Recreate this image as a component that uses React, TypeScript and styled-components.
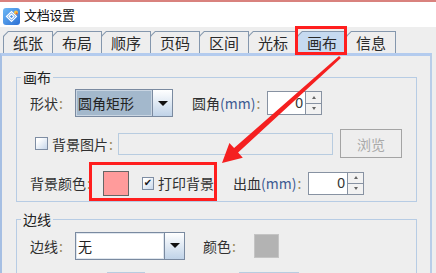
import React from "react";
import styled, { createGlobalStyle } from "styled-components";

const GlobalStyle = createGlobalStyle`
  html, body {
    margin: 0;
    padding: 0;
    background: #eeeeee;
  }
  body {
    font-family: "Noto Sans CJK SC", "Noto Sans", sans-serif;
    overflow: hidden;
  }
`;

const tabs = ["纸张", "布局", "顺序", "页码", "区间", "光标", "画布", "信息"];

const Colon: React.FC = () => <Dot>:</Dot>;

const App: React.FC = () => {
	return (
		<Window>
			<GlobalStyle />
			<TopStrip />
			<TitleBar>
				<AppIcon />
				<TitleText>文档设置</TitleText>
			</TitleBar>
			<TabStrip>
				{tabs.map((t) => (
					<TabSlot key={t} $active={t === "画布"}>
						<TabOuter>
							<TabInner $active={t === "画布"}>{t}</TabInner>
						</TabOuter>
					</TabSlot>
				))}
			</TabStrip>
			<Panel>
				<Group>
					<Legend>画布</Legend>
					<GroupBody>
						<Row $h={28}>
							<Label $w={45}>
								形状<Colon />
							</Label>
							<Combo $w={98} $selected>
								<ComboField $selected>圆角矩形</ComboField>
								<ArrowButton>
									<Triangle />
								</ArrowButton>
							</Combo>
							<Label $w={75} $ml={19}>
								圆角<Unit>(mm)</Unit>
								<Colon />
							</Label>
							<Spinner $w={55} $h={24} />
						</Row>
						<Row $h={29}>
							<CheckBox $ml={5} />
							<Label $w={66} $ml={4}>
								背景图片<Colon />
							</Label>
							<TextField />
							<Button disabled>浏览</Button>
						</Row>
						<Row $h={26}>
							<Label $w={73}>
								背景颜色<Colon />
							</Label>
							<Highlight>
								<Swatch $w={26} $h={25} $color="#ff9b9b" $border="#666666" />
								<CheckBox $ml={13} $checked>
									✔
								</CheckBox>
								<Label $w={56} $ml={4}>
									打印背景
								</Label>
							</Highlight>
							<Label $w={75} $ml={19}>
								出血<Unit>(mm)</Unit>
								<Colon />
							</Label>
							<Spinner $w={56} $h={23} />
						</Row>
					</GroupBody>
				</Group>
				<Group $mt={9}>
					<Legend>边线</Legend>
					<GroupBody $pt={5} $gap={13}>
						<Row $h={27}>
							<Label $w={45}>
								边线<Colon />
							</Label>
							<Combo $w={110}>
								<ComboField>无</ComboField>
								<ArrowButton>
									<Triangle />
								</ArrowButton>
							</Combo>
							<Label $w={51} $ml={18}>
								颜色<Colon />
							</Label>
							<Swatch $w={25} $h={24} $color="#b3b3b3" $border="#c4c4c4" />
						</Row>
						<Row $h={24}>
							<StubBox $w={38} $ml={77} />
							<StubBox $w={60} $ml={94} />
						</Row>
					</GroupBody>
				</Group>
			</Panel>
			<ArrowOverlay width="436" height="273" viewBox="0 0 436 273">
				<polygon
					points="340.9,58 238.1,152.5 242.8,157.7 222,163 229.4,142.9 234.1,148.1 339.1,56"
					fill="#f52020"
				/>
			</ArrowOverlay>
		</Window>
	);
};

const Spinner: React.FC<{ $w: number; $h: number }> = ({ $w, $h }) => (
	<SpinBox $w={$w} $h={$h}>
		<SpinField>0</SpinField>
		<SpinButtons>
			<SpinHalf>
				<SmallArrow $up />
			</SpinHalf>
			<SpinHalf>
				<SmallArrow />
			</SpinHalf>
		</SpinButtons>
	</SpinBox>
);

const AppIcon: React.FC = () => (
	<IconSvg width="17" height="17" viewBox="0 0 17 17">
		<defs>
			<linearGradient id="ig" x1="0" y1="0" x2="1" y2="1">
				<stop offset="0" stopColor="#6cb9f6" />
				<stop offset="1" stopColor="#2c6fd4" />
			</linearGradient>
		</defs>
		<rect x="0" y="0" width="17" height="17" rx="3" fill="url(#ig)" />
		<g fill="none" stroke="#ffffff" strokeWidth="1.2">
			<path d="M3.5 8.5 L8.5 3.5 L13.5 8.5 L8.5 13.5 Z" />
			<path d="M6 8.5 L8.5 6 L11 8.5 L8.5 11 Z" />
		</g>
		<circle cx="13" cy="4.5" r="2" fill="#f6c343" />
		<circle cx="13.6" cy="5.4" r="0.9" fill="#e8553a" />
	</IconSvg>
);

const Window = styled.div`
  position: relative;
  width: 436px;
  height: 273px;
  overflow: hidden;
  display: flex;
  flex-direction: column;
  background: #eeeeee;
`;

const TopStrip = styled.div`
  height: 2px;
  background: #d9827e;
  flex-shrink: 0;
`;

const TitleBar = styled.div`
  height: 25px;
  flex-shrink: 0;
  background: #ffffff;
  display: flex;
  align-items: center;
  padding-left: 3px;
  gap: 4px;
`;

const IconSvg = styled.svg`
  margin-top: 3px;
  flex-shrink: 0;
`;

const TitleText = styled.span`
  font-size: 13px;
  color: #111111;
  letter-spacing: -0.3px;
`;

const TabStrip = styled.div`
  height: 26px;
  flex-shrink: 0;
  display: flex;
  align-items: flex-end;
  padding-left: 3px;
`;

const TabSlot = styled.div<{ $active?: boolean }>`
  position: relative;
  width: 50px;
  height: 22px;
  margin-right: -1px;
  ${({ $active }) =>
		$active &&
		`
    &::after {
      content: "";
      position: absolute;
      left: -2px;
      top: -5px;
      right: 0;
      bottom: -2px;
      border: 3px solid #ff1e1e;
      z-index: 3;
      pointer-events: none;
    }
  `}
`;

const TabOuter = styled.div`
  height: 100%;
  box-sizing: border-box;
  padding: 1px 1px 0 1px;
  background: #8497ad;
  clip-path: polygon(5px 0, 100% 0, 100% 100%, 0 100%, 0 5px);
`;

const TabInner = styled.div<{ $active?: boolean }>`
  height: 100%;
  display: flex;
  align-items: center;
  justify-content: center;
  background: ${({ $active }) => ($active ? "#c6daf0" : "#eeeeee")};
  clip-path: polygon(4.4px 0, 100% 0, 100% 100%, 0 100%, 0 4.4px);
  font-size: 15px;
  color: #2a2a2a;
`;

const Panel = styled.div`
  flex: 1;
  width: 432px;
  box-sizing: border-box;
  border-top: 3px solid #b3cbee;
  border-left: 2px solid #a6bfe3;
  border-right: 2px solid #b9cde8;
  padding: 13px 14px 0 14px;
  overflow: hidden;
`;

const Group = styled.fieldset<{ $mt?: number }>`
  margin: ${({ $mt }) => $mt ?? 0}px 0 0 0;
  padding: 0;
  width: 401px;
  box-sizing: border-box;
  border: 1px solid #b7cce4;
  min-inline-size: 0;
`;

const Legend = styled.legend`
  margin-left: 4px;
  padding: 0 2px;
  font-size: 14px;
  line-height: 16px;
  color: #222222;
`;

const GroupBody = styled.div<{ $pt?: number; $gap?: number }>`
  display: flex;
  flex-direction: column;
  gap: ${({ $gap }) => $gap ?? 12}px;
  padding: ${({ $pt }) => $pt ?? 4}px 13px 5px 13px;
`;

const Row = styled.div<{ $h: number }>`
  display: flex;
  align-items: center;
  height: ${({ $h }) => $h}px;
`;

const Label = styled.span<{ $w: number; $ml?: number }>`
  width: ${({ $w }) => $w}px;
  margin-left: ${({ $ml }) => $ml ?? 0}px;
  flex-shrink: 0;
  font-size: 14px;
  color: #303030;
  white-space: nowrap;
`;

const Dot = styled.span`
  color: #9a8a5a;
  margin-left: 1px;
`;

const Unit = styled.span`
  color: #3d5b92;
`;

const Combo = styled.div<{ $w: number; $selected?: boolean }>`
  width: ${({ $w }) => $w}px;
  height: 28px;
  box-sizing: border-box;
  display: flex;
  border: 1px solid #7a8aa0;
  flex-shrink: 0;
`;

const ComboField = styled.div<{ $selected?: boolean }>`
  flex: 1;
  display: flex;
  align-items: center;
  padding-left: 2px;
  box-shadow: inset 0 0 0 1px ${({ $selected }) => ($selected ? "#c9d5e2" : "#dfe6ee")};
  background: ${({ $selected }) => ($selected ? "#a3b8cc" : "#ffffff")};
  font-size: 14px;
  color: #222222;
`;

const ArrowButton = styled.div`
  width: 19px;
  border-left: 1px solid #7a8aa0;
  background: linear-gradient(#ffffff, #c0d3e8);
  display: flex;
  align-items: center;
  justify-content: center;
`;

const Triangle = styled.div`
  width: 0;
  height: 0;
  border-left: 5px solid transparent;
  border-right: 5px solid transparent;
  border-top: 5px solid #111111;
`;

const SpinBox = styled.div<{ $w: number; $h: number }>`
  width: ${({ $w }) => $w}px;
  height: ${({ $h }) => $h}px;
  box-sizing: border-box;
  display: flex;
  border: 1px solid #8792a2;
  flex-shrink: 0;
`;

const SpinField = styled.div`
  flex: 1;
  background: #ffffff;
  display: flex;
  align-items: center;
  justify-content: flex-end;
  padding-right: 2px;
  font-size: 14px;
  color: #333333;
  font-family: "Liberation Sans", sans-serif;
`;

const SpinButtons = styled.div`
  width: 15px;
  display: flex;
  flex-direction: column;
  border-left: 1px solid #8792a2;
`;

const SpinHalf = styled.div`
  flex: 1;
  display: flex;
  align-items: center;
  justify-content: center;
  background: #f2f2f2;
  & + & {
    border-top: 1px solid #8792a2;
  }
`;

const SmallArrow = styled.div<{ $up?: boolean }>`
  width: 0;
  height: 0;
  border-left: 2px solid transparent;
  border-right: 2px solid transparent;
  ${({ $up }) => ($up ? "border-bottom: 3px solid #666;" : "border-top: 3px solid #666;")}
`;

const CheckBox = styled.div<{ $ml?: number; $checked?: boolean }>`
  width: ${({ $checked }) => ($checked ? 12 : 13)}px;
  height: 13px;
  box-sizing: border-box;
  margin-left: ${({ $ml }) => $ml ?? 0}px;
  border: 1px solid #7e8da3;
  background: linear-gradient(135deg, #ffffff 20%, #c6d6ea);
  flex-shrink: 0;
  display: flex;
  align-items: center;
  justify-content: center;
  font-size: 10px;
  line-height: 1;
  color: #1a1a1a;
  font-family: "DejaVu Sans", sans-serif;
`;

const TextField = styled.div`
  width: 215px;
  height: 22px;
  box-sizing: border-box;
  border: 1px solid #b8cce0;
  background: #eeeeee;
  flex-shrink: 0;
`;

const Button = styled.button`
  margin-left: 7px;
  width: 62px;
  height: 29px;
  box-sizing: border-box;
  border: 1px solid #a4a4a4;
  background: #eeeeee;
  color: #a9a9a9;
  font-family: "Noto Sans CJK SC", sans-serif;
  font-size: 14px;
  padding: 0;
`;

const Highlight = styled.div`
  position: relative;
  display: flex;
  align-items: center;
  height: 100%;
  &::after {
    content: "";
    position: absolute;
    left: -14px;
    top: -8px;
    right: -3px;
    bottom: -5px;
    border: 3px solid #ff1e1e;
    pointer-events: none;
  }
`;

const Swatch = styled.div<{ $w: number; $h: number; $color: string; $border: string }>`
  width: ${({ $w }) => $w}px;
  height: ${({ $h }) => $h}px;
  box-sizing: border-box;
  background: ${({ $color }) => $color};
  border: 1px solid ${({ $border }) => $border};
  flex-shrink: 0;
`;

const StubBox = styled.div<{ $w: number; $ml: number }>`
  width: ${({ $w }) => $w}px;
  margin-left: ${({ $ml }) => $ml}px;
  height: 24px;
  box-sizing: border-box;
  border: 1px solid #b8cce0;
  flex-shrink: 0;
`;

const ArrowOverlay = styled.svg`
  position: absolute;
  left: 0;
  top: 0;
  pointer-events: none;
  z-index: 5;
`;

export default App;
